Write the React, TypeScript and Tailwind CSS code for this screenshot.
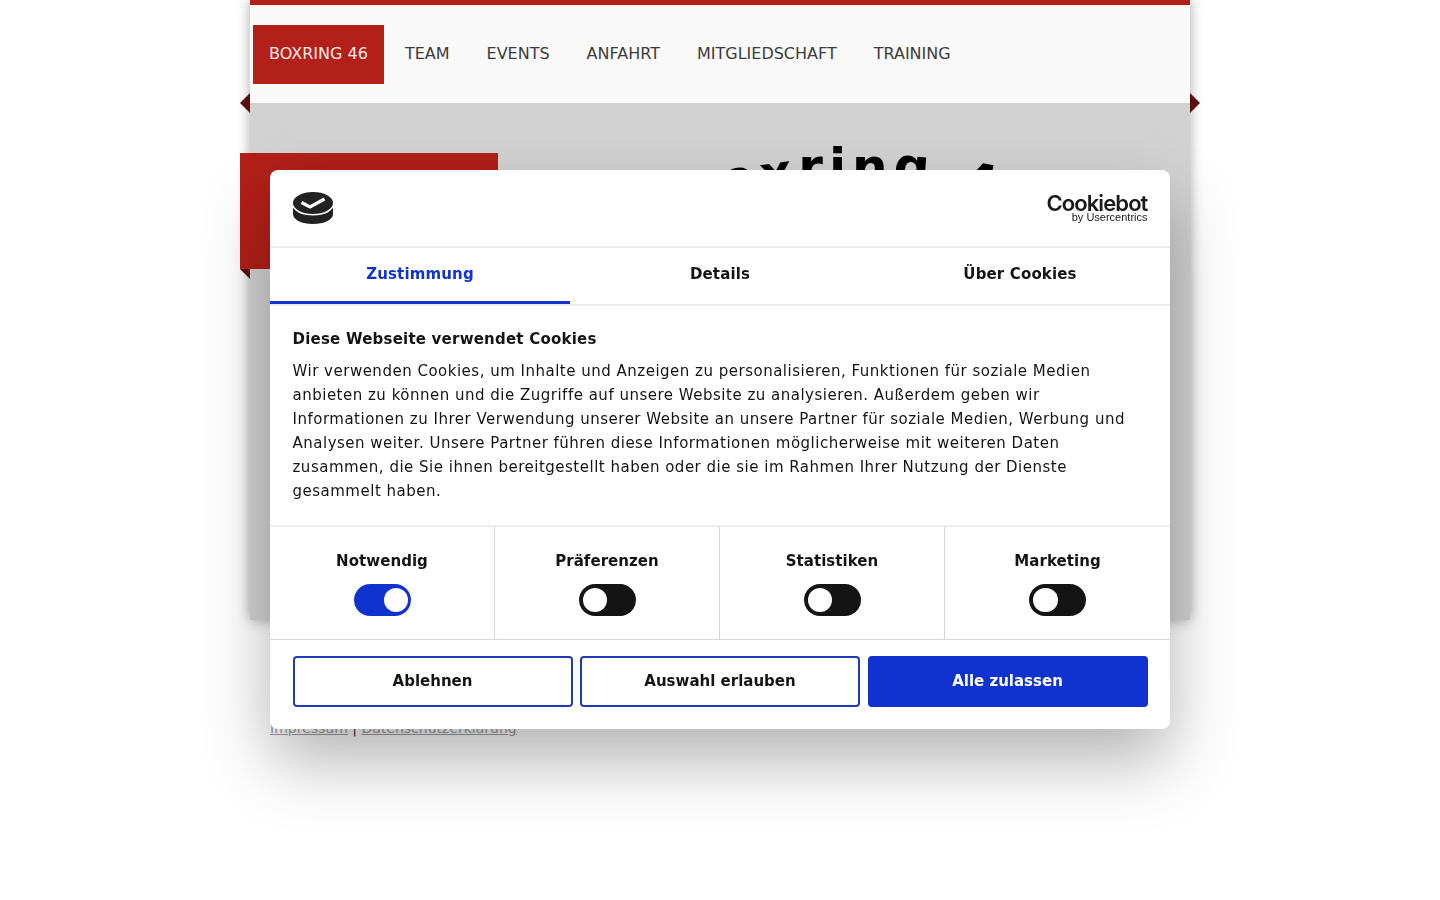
const navItems = ["TEAM", "EVENTS", "ANFAHRT", "MITGLIEDSCHAFT", "TRAINING"];

const arcLetters = [
  { ch: "B", cls: "translate-y-[44px] -rotate-[24deg]" },
  { ch: "o", cls: "translate-y-[11px] -rotate-[16deg]" },
  { ch: "x", cls: "translate-y-[6px] -rotate-[8deg]" },
  { ch: "r", cls: "translate-y-[0px]" },
  { ch: "i", cls: "translate-y-[0px]" },
  { ch: "n", cls: "translate-y-[0px]" },
  { ch: "g", cls: "translate-y-[0px] rotate-[4deg]" },
  { ch: "\u00a0", cls: "" },
  { ch: "4", cls: "translate-y-[16px] translate-x-[4px] rotate-[10deg]" },
  { ch: "6", cls: "translate-y-[44px] rotate-[18deg]" },
];

const toggles = [
  { label: "Notwendig", on: true },
  { label: "Präferenzen", on: false },
  { label: "Statistiken", on: false },
  { label: "Marketing", on: false },
];

function CookieLogo() {
  return (
    <svg width="42" height="33" viewBox="0 0 42 33" className="-ml-[0.5px] block">
      <path
        d="M1 15.5 C4 20.5 11 23.5 21 23.5 C31 23.5 38 20.5 41 15.5 V22 C41 28 32 32 21 32 C10 32 1 28 1 22 Z"
        fill="#222"
      />
      <ellipse cx="21" cy="11" rx="20" ry="11" fill="#222" />
      <path d="M9.5 10.5 L18 15 L32.5 7" fill="none" stroke="#fff" strokeWidth="3.2" />
    </svg>
  );
}

export default function App() {
  return (
    <div className="min-h-[900px] bg-white font-['DejaVu_Sans',sans-serif]">
      <div className="mx-auto w-[940px] shadow-[0_0_12px_rgba(0,0,0,0.35)]">
        <div className="relative z-10 h-[98px] border-t-[5px] border-[#b31f19] bg-[#f9f9f9] box-content">
          <nav className="flex gap-[5px] pl-[3px] pt-5">
            <a className="flex h-[59px] items-center bg-[#b31f19] px-4 pb-[2px] text-base text-[#fbe9e7]">BOXRING 46</a>
            {navItems.map((item) => (
              <a key={item} className="flex h-[59px] items-center px-4 pb-[2px] text-base text-[#3c3c3c]">
                {item}
              </a>
            ))}
          </nav>
          <div className="absolute -left-[10px] top-[88px] h-0 w-0 border-y-[10px] border-r-[10px] border-y-transparent border-r-[#5c0c0c]" />
          <div className="absolute -right-[10px] top-[88px] h-0 w-0 border-y-[10px] border-l-[10px] border-y-transparent border-l-[#5c0c0c]" />
        </div>
        <main className="relative h-[517px] bg-[#d2d2d2]">
          <div className="absolute -left-[10px] top-[50px] h-[116px] w-[258px] bg-[#b31f19]" />
          <div className="absolute -left-[10px] top-[166px] h-0 w-0 border-t-[10px] border-l-[10px] border-t-[#5c0c0c] border-l-transparent" />
          <div className="flex justify-center pl-[276px] pt-[34px]">
            <h1 className="flex text-[50px] font-bold leading-[60px] tracking-[6px] text-black">
              {arcLetters.map((l, i) => (
                <span key={i} className={`inline-block ${l.cls}`}>
                  {l.ch}
                </span>
              ))}
            </h1>
          </div>
        </main>
      </div>
      <footer className="mx-auto w-[940px] px-5 pt-[98px] text-[14px] text-[#a0a0a0]">
        <a className="underline">Impressum</a>
        <span className="text-[#333]"> | </span>
        <a className="underline">Datenschutzerklärung</a>
      </footer>

      <div className="fixed inset-x-0 top-[169.5px] mx-auto w-[900px] overflow-hidden rounded-lg bg-white text-[#141414] shadow-[0_32px_68px_rgba(0,0,0,0.3)]">
        <div className="flex h-[78px] items-start justify-between border-b-2 border-[#ececec] px-[22.5px] pt-[22px]">
          <CookieLogo />
          <div className="flex flex-col items-end">
            <span className="mt-[1px] font-['Inter',sans-serif] text-[22px] font-semibold leading-[21px] tracking-[-0.9px] text-[#1a1a1a]">
              Cookiebot
            </span>
            <span className="font-['Liberation_Sans',sans-serif] text-[11px] leading-[7px] text-[#1a1a1a]">
              by Usercentrics
            </span>
          </div>
        </div>
        <div className="grid h-[58px] grid-cols-3 border-b-2 border-[#ececec] text-[15px] font-bold tracking-[0.15px]">
          <div className="flex items-center justify-center border-b-[3px] border-[#1032cf] text-[#1032cf]">Zustimmung</div>
          <div className="flex items-center justify-center pb-[3px]">Details</div>
          <div className="flex items-center justify-center pb-[3px]">Über Cookies</div>
        </div>
        <div className="h-[219px] px-[22.5px] pt-[21.5px] text-[15px] leading-6 tracking-[0.5px]">
          <h2 className="mb-2 font-bold tracking-[0.22px]">Diese Webseite verwendet Cookies</h2>
          <p>
            Wir verwenden Cookies, um Inhalte und Anzeigen zu personalisieren, Funktionen für soziale Medien
            <br />
            anbieten zu können und die Zugriffe auf unsere Website zu analysieren. Außerdem geben wir
            <br />
            Informationen zu Ihrer Verwendung unserer Website an unsere Partner für soziale Medien, Werbung und
            <br />
            Analysen weiter. Unsere Partner führen diese Informationen möglicherweise mit weiteren Daten
            <br />
            zusammen, die Sie ihnen bereitgestellt haben oder die sie im Rahmen Ihrer Nutzung der Dienste
            <br />
            gesammelt haben.
          </p>
        </div>
        <div className="grid h-[115px] grid-cols-4 border-y border-t-2 border-t-[#ececec] border-b-[#d6d6e0]">
          {toggles.map((t, i) => (
            <div
              key={t.label}
              className={`flex flex-col items-center pt-[24px] ${i < 3 ? "border-r border-[#d6d6e0]" : ""}`}
            >
              <span className="text-[15px] font-bold leading-5 tracking-[0.05px]">{t.label}</span>
              <span
                className={`mt-[13.5px] flex h-[32px] w-[57px] items-center rounded-full ${
                  t.on ? "justify-end bg-[#1032cf] pr-[2.5px]" : "justify-start bg-[#141414] pl-[4px]"
                }`}
              >
                <span className="h-[24.5px] w-[24.5px] rounded-full bg-white" />
              </span>
            </div>
          ))}
        </div>
        <div className="flex h-[89px] gap-[7.5px] px-[22.5px] pt-[16px] text-[15px] font-bold">
          <button className="h-[51.5px] w-[280px] rounded border-2 border-[#1f3bb8] bg-white">Ablehnen</button>
          <button className="h-[51.5px] w-[280px] rounded border-2 border-[#1f3bb8] bg-white">Auswahl erlauben</button>
          <button className="h-[51.5px] w-[280px] rounded border-2 border-[#1032cf] bg-[#1032cf] text-white">Alle zulassen</button>
        </div>
      </div>
    </div>
  );
}
